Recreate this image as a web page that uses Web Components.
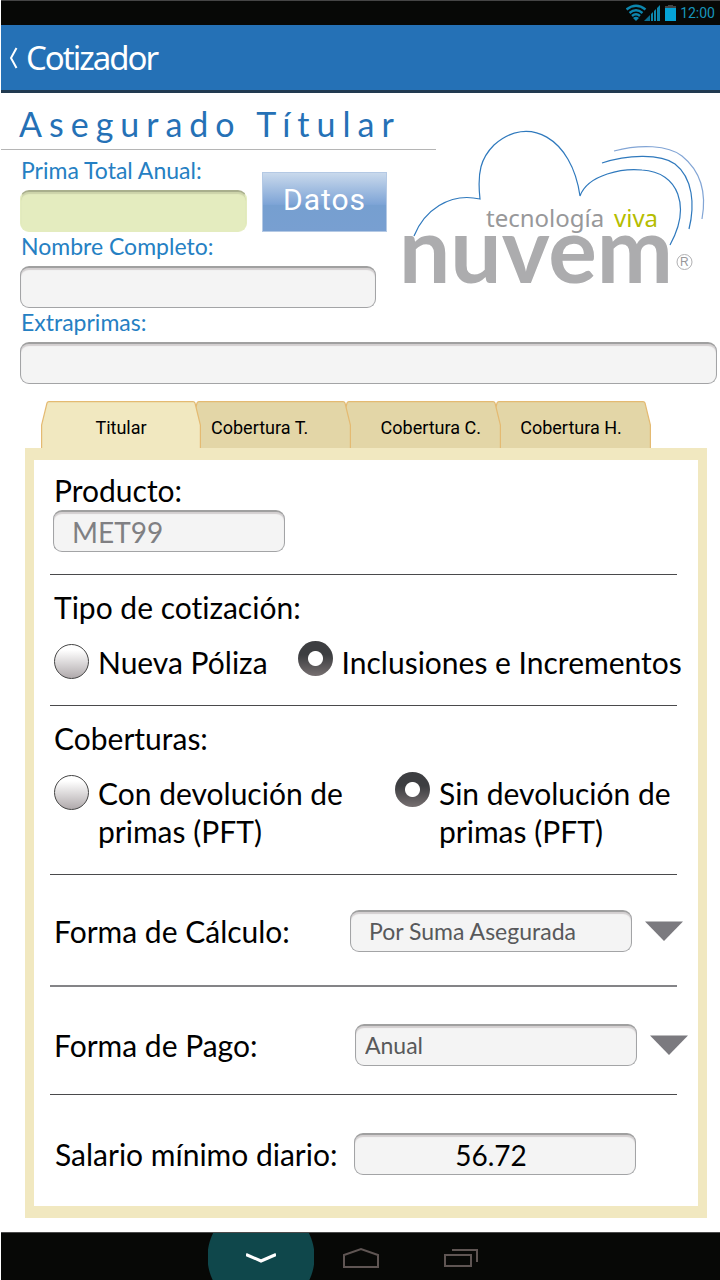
<!DOCTYPE html>
<html lang="es">
<head>
<meta charset="utf-8">
<meta name="viewport" content="width=device-width, initial-scale=1">
<title>Cotizador</title>
<style>
  body { margin: 0; background: #fff; font-family: Lato, "Noto Sans", sans-serif; font-variant-ligatures: none; color: #000; }
</style>
</head>
<body>
<quote-app></quote-app>

<script>
const define = (name, html, setup) => {
  const template = document.createElement('template');
  template.innerHTML = html;
  customElements.define(name, class extends HTMLElement {
    constructor() {
      super();
      this.attachShadow({ mode: 'open' }).append(template.content.cloneNode(true));
    }
    connectedCallback() {
      if (setup && !this.ready) { this.ready = true; setup(this, this.shadowRoot); }
    }
  });
};

const boxStyle = `
  box-sizing: border-box; width: 100%; height: 42px; margin: 0; border: 1px solid #a3a4a6;
  border-top: 2px solid #a0a0a0; border-radius: 9px; background: #f4f4f4;
  box-shadow: inset 0 2px 1px #d3cfd0; font-family: inherit; outline-offset: 1px;`;

define('status-bar', `
  <style>
    :host { display: flex; align-items: center; justify-content: flex-end; gap: 4px; height: 25px;
      padding-right: 5px; background: #070806; border-top: 1px solid #454545; box-sizing: border-box;
      color: #1795bb; font: 14px/20px Roboto, sans-serif; }
    svg { display: block; }
  </style>
  <svg width="50" height="18" viewBox="0 0 50 18" aria-hidden="true">
    <g fill="none" stroke="#0c86ad" stroke-width="2.400">
      <path d="M0.500 5.500Q10 -2 19.500 5.500"/><path d="M3.500 9Q10 3.500 16.500 9"/><path d="M6 12Q10 8.500 14 12"/>
    </g>
    <path d="M7 14Q10 11.500 13 14L10 17Z" fill="#0c86ad"/>
    <path d="M18 17L24 11V17Z" fill="#0b6d8e"/>
    <path d="M25 17V10L27 8V17ZM28 17V7L30 5V17ZM31 17V4L34 1V17Z" fill="#0c86ad"/>
    <path d="M39 4V2H42V1H47V2H50V4Z" fill="#444"/>
    <path d="M39 4H50V17H39Z" fill="#05a3d6"/>
  </svg>
  <span>12:00</span>`);

define('app-header', `
  <style>
    :host { display: flex; align-items: center; gap: 7px; box-sizing: border-box; height: 68px; padding: 0 8px;
      background: #2571b6; border-bottom: 3px solid #213a50; color: #fff; }
    a { display: block; color: inherit; }
    svg { display: block; }
    h1 { margin: 0; font: 33px/40px "Noto Sans", sans-serif; letter-spacing: -2px; }
  </style>
  <a href="#" aria-label="Volver"><svg width="10" height="22" viewBox="0 0 10 22"><path d="M7.500 1L2 11L7.500 21" fill="none" stroke="#fff" stroke-width="2"/></svg></a>
  <h1><slot></slot></h1>`);

define('text-field', `
  <style>
    :host { display: block; }
    label { display: block; padding: 0 0 6px 1px; color: #2580c3; font-size: 23px; line-height: 28px; }
    input { ${boxStyle} display: block; padding: 0 18px; }
    :host([tone="total"]) input { background: #e4ecbf; border-color: #e4ecbf; border-top-color: #a9af8d; box-shadow: inset 0 2px 1px #ccd3aa; }
    :host([size="large"]) label { padding-bottom: 0; color: #000; font-size: 30px; line-height: 40px; }
    :host([size="large"]) input { width: 232px; font-size: 28px; color: #808083; }
    :host([layout="row"]) { display: flex; align-items: center; justify-content: space-between; }
    :host([layout="row"]) input { width: 282px; color: #000; text-align: center; padding: 0 24px 0 16px; }
  </style>
  <label for="field"></label><input id="field" type="text">`,
  (host, root) => {
    root.querySelector('label').textContent = host.getAttribute('label');
    root.querySelector('input').value = host.getAttribute('value') || '';
  });

define('push-button', `
  <style>
    :host { display: block; }
    button { display: block; width: 125px; height: 60px; margin: 0; padding: 0 0 4px; border: 1px solid #b4c9e4; border-radius: 0;
      background: linear-gradient(#c9d9ec, #7ea4d6 54%, #769fd0 56%, #789fd1); color: #fff;
      font: 30px/40px Roboto, sans-serif; letter-spacing: 1px; }
  </style>
  <button type="button"><slot></slot></button>`);

define('brand-logo', `
  <style>
    :host { display: block; }
    svg { display: block; width: 100%; height: auto; }
    .tag { font: 24px "Noto Sans", sans-serif; }
    .name { font: 700 91px Lato, sans-serif; }
    .mark { font: 12px "Liberation Sans", sans-serif; }
  </style>
  <svg viewBox="390 93 330 215" role="img" aria-label="nuvem, tecnología viva">
    <g fill="none" stroke="#2f79bd" stroke-width="1.200">
      <path d="M414 236C424 211 449 192 480 199C477 172 481 158 494 145C528 114 572 138 580 196C588 174 624 168 642 170C679 172 691 207 670 245"/>
      <path d="M602 163C626 155 660 153 675 164C693 178 695 205 689 229"/>
      <path d="M614 151C640 144 668 145 682 156C703 173 706 197 702 219" stroke="#82a5d5"/>
    </g>
    <text class="tag" x="486" y="227" fill="#98989a">tecnología</text>
    <text class="tag" x="614" y="227" fill="#b5bd00">viva</text>
    <text class="name" x="399" y="283" fill="#acacae">nuvem</text>
    <circle cx="684.500" cy="262" r="7.500" fill="none" stroke="#b0b0b2"/>
    <text class="mark" x="680" y="266" fill="#98989a">R</text>
  </svg>`);

define('tab-item', `
  <style>
    :host { display: block; flex: 1; margin-left: -10px; position: relative; min-width: 0; --fill: #e3d6a7; z-index: var(--level); }
    :host(:first-child) { margin-left: 0; }
    :host([active]) { --fill: #f1e8c0; }
    button { display: grid; align-items: center; width: 100%; height: 47px; margin: 0; padding: 0; border: 0; background: none;
      color: #000; font: 18px/24px Roboto, sans-serif; text-align: center; }
    svg, span { grid-area: 1 / 1; }
    svg { display: block; width: 100%; height: 47px; }
    path { fill: var(--fill); stroke: #e4ba72; stroke-width: 1.200; vector-effect: non-scaling-stroke; }
    span { padding: 6px 20px 0; }
    :host([align="start"]) span { text-align: left; }
    :host([align="end"]) span { text-align: right; }
  </style>
  <button type="button" role="tab">
    <svg viewBox="0 0 160 47" preserveAspectRatio="none" aria-hidden="true"><path d="M.600 48V24L6 2Q6.500 .600 8 .600H152Q153.500 .600 154 2L159.400 24V48"/></svg>
    <span><slot></slot></span>
  </button>`,
  (host, root) => root.querySelector('button').setAttribute('aria-selected', host.hasAttribute('active')));

define('tab-bar', `
  <style>
    :host { display: flex; margin: 17px 69px 0 40px; isolation: isolate; }
    ::slotted(:nth-child(1)) { --level: 4; }
    ::slotted(:nth-child(2)) { --level: 3; }
    ::slotted(:nth-child(3)) { --level: 2; }
    ::slotted(:nth-child(4)) { --level: 1; }
  </style>
  <slot></slot>`, host => host.setAttribute('role', 'tablist'));

define('form-section', `
  <style>
    :host { display: block; margin: 0 21px 0 16px; padding: 12px 0 24px 3px; border-bottom: 1px solid #4a4a4c; }
    :host(:first-child) { padding: 10px 0 22px 3px; }
  </style>
  <slot></slot>`);

define('radio-group', `
  <style>
    :host { display: block; }
    fieldset { margin: 0; padding: 0; border: 0; min-width: 0; }
    legend { padding: 0 0 16px 1px; font-size: 30px; line-height: 40px; }
    .options { display: flex; gap: 30px; padding-left: 1px; margin-right: -8px; }
    :host([columns]) .options { display: grid; grid-template-columns: 311fr 290fr; }
    label { display: flex; gap: 9px; font-size: 30px; line-height: 38px; }
    input { appearance: none; flex: none; width: 35px; height: 35px; margin: 1px 0 0; border-radius: 50%;
      border: 1px solid #444; background: linear-gradient(#fff 15%, #b0aaac); }
    input:checked { margin-top: -2px; border: 0;
      background: radial-gradient(circle, #fff 7px, transparent 8px), linear-gradient(#3d3e41 40%, #766f70); }
  </style>
  <fieldset><legend></legend><div class="options"></div></fieldset>`,
  (host, root) => {
    root.querySelector('legend').textContent = host.getAttribute('label');
    const box = root.querySelector('.options');
    host.getAttribute('options').split('|').forEach((text, i) => {
      const label = document.createElement('label');
      const input = document.createElement('input');
      const span = document.createElement('span');
      input.type = 'radio';
      input.name = 'choice';
      input.checked = i === Number(host.getAttribute('selected'));
      span.textContent = text;
      label.append(input, span);
      box.append(label);
    });
  });

define('select-field', `
  <style>
    :host { display: flex; align-items: center; justify-content: space-between; }
    label { font-size: 30px; line-height: 40px; }
    .control { display: flex; align-items: center; gap: 13px; }
    select { ${boxStyle} appearance: none; width: 282px; padding: 0 9px 2px; font-size: 23px; color: #58595b; }
    :host([inset]) select { padding-left: 18px; }
    svg { display: block; }
  </style>
  <label for="choice"></label>
  <div class="control"><select id="choice"><option></option></select>
  <svg width="38" height="20" viewBox="0 0 38 20" aria-hidden="true"><path d="M0 .500H38L19 20Z" fill="#7b7a7f"/></svg></div>`,
  (host, root) => {
    root.querySelector('label').textContent = host.getAttribute('label');
    root.querySelector('option').textContent = host.getAttribute('value');
  });

define('nav-bar', `
  <style>
    :host { display: flex; height: 48px; padding-left: 207px; box-sizing: border-box; background: #070806; border-top: 1px solid #4b4b4b; }
    button { display: grid; place-items: center; width: 106px; height: 47px; margin: 0; padding: 2px 0 0; border: 0; background: none; overflow: hidden; }
    .back { background: radial-gradient(circle at 53px 24px, #0f474b 53px, transparent 54px); }
    .home { width: 94px; }
    svg { display: block; fill: none; }
  </style>
  <button class="back" type="button" aria-label="Ocultar"><svg width="30" height="10" viewBox="0 0 30 10"><path d="M0 1.500L15 8L30 1.500" stroke="#fff" stroke-width="3"/></svg></button>
  <button class="home" type="button" aria-label="Inicio"><svg width="38" height="22" viewBox="0 0 38 22"><path d="M2 20V8L19 2L36 8V20Z" stroke="#5f5553" stroke-width="2"/></svg></button>
  <button type="button" aria-label="Recientes"><svg width="34" height="20" viewBox="0 0 34 20"><path d="M1 7H27V18H1ZM8 2H33V14" stroke="#5f5553" stroke-width="2"/></svg></button>`);

define('quote-app', `
  <style>
    :host { display: flex; flex-direction: column; min-height: 100vh; padding-left: 1px; box-sizing: border-box; }
    main { flex: 1; padding-bottom: 14px; }
    .insured { display: grid; grid-template-columns: 389fr 46fr 284fr; }
    h2 { grid-area: 1 / 1 / 2 / 3; margin: 0; padding: 9px 0 4px 18px; border-bottom: 1px solid #b5b5b5;
      color: #2571b6; font: 34px/43px Lato, sans-serif; letter-spacing: 7px; white-space: nowrap; }
    brand-logo { grid-area: 1 / 2 / 3 / 4; }
    .owner { grid-area: 2 / 1 / 3 / 2; padding: 6px 14px 0 19px; }
    .total { display: flex; align-items: flex-end; gap: 15px; margin-right: -11px; }
    .total text-field { flex: 1; }
    .extra { grid-area: 3 / 1 / 4 / 4; padding: 0 3px 0 19px; }
    .panel { margin: 0 13px 0 24px; border: solid #f1e8c0; border-width: 12px 9px; }
    hr { height: 1px; margin: 0 21px 0 16px; border: 0; background: #4a4a4c; }
    hr.soft { height: 2px; background: #848487; }
    .calc { padding: 35px 15px 33px 20px; }
    .pay { padding: 37px 10px 28px 20px; }
    .wage { padding: 38px 62px 31px 20px; }
  </style>
  <status-bar></status-bar>
  <app-header>Cotizador</app-header>
  <main>
    <section class="insured">
      <h2>Asegurado Títular</h2>
      <brand-logo></brand-logo>
      <div class="owner">
        <div class="total">
          <text-field label="Prima Total Anual:" tone="total"></text-field>
          <push-button>Datos</push-button>
        </div>
        <text-field label="Nombre Completo:"></text-field>
      </div>
      <text-field class="extra" label="Extraprimas:"></text-field>
    </section>
    <tab-bar>
      <tab-item active>Titular</tab-item>
      <tab-item align="start">Cobertura T.</tab-item>
      <tab-item align="end">Cobertura C.</tab-item>
      <tab-item>Cobertura H.</tab-item>
    </tab-bar>
    <section class="panel">
      <form-section><text-field size="large" label="Producto:" value="MET99"></text-field></form-section>
      <form-section><radio-group label="Tipo de cotización:" options="Nueva Póliza|Inclusiones e Incrementos" selected="1"></radio-group></form-section>
      <form-section><radio-group columns label="Coberturas:" options="Con devolución de primas (PFT)|Sin devolución de primas (PFT)" selected="1"></radio-group></form-section>
      <div class="calc"><select-field inset label="Forma de Cálculo:" value="Por Suma Asegurada"></select-field></div>
      <hr class="soft">
      <div class="pay"><select-field label="Forma de Pago:" value="Anual"></select-field></div>
      <hr>
      <div class="wage"><text-field size="large" layout="row" label="Salario mínimo diario:" value="56.72"></text-field></div>
    </section>
  </main>
  <nav-bar></nav-bar>`);
</script>
</body>
</html>
